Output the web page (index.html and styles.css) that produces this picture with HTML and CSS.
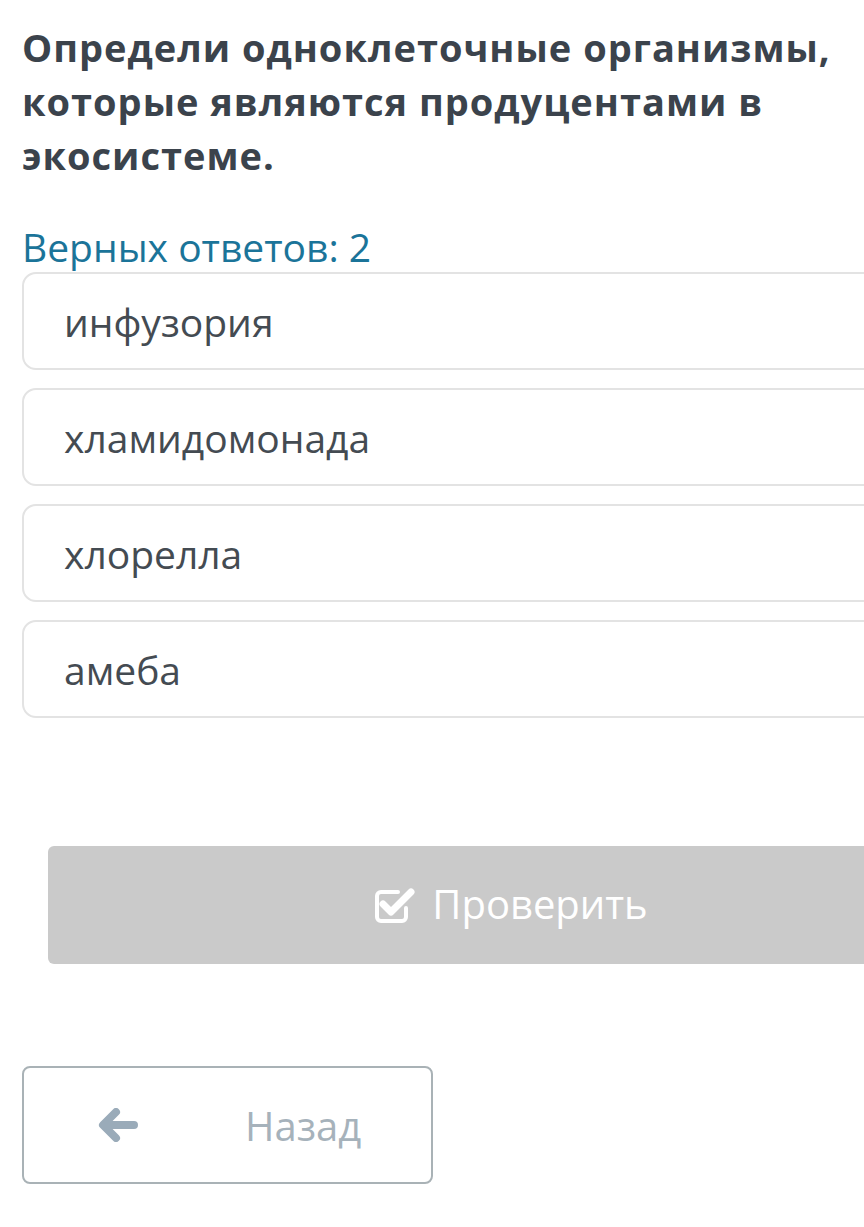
FILE: index.html
```html
<!DOCTYPE html>
<html lang="ru">
<head>
  <meta charset="UTF-8" />
  <meta name="viewport" content="width=device-width, initial-scale=1.0" />
  <title>Тест</title>
  <link rel="stylesheet" href="styles.css">
</head>
<body>

  <div class="page">
    <h1 class="question">Определи одноклеточные организмы, которые являются продуцентами в экосистеме.</h1>

    <p class="hint">Верных ответов: 2</p>

    <div class="answers">
      <div class="answer">инфузория</div>
      <div class="answer">хламидомонада</div>
      <div class="answer">хлорелла</div>
      <div class="answer">амеба</div>
    </div>

    <button class="check-btn" disabled>
      <svg class="check-icon" viewBox="0 0 42 38" width="42" height="38">
        <path d="M32 22 V31 a4 4 0 0 1 -4 4 H7 a4 4 0 0 1 -4 -4 V10 a4 4 0 0 1 4 -4 H24" fill="none" stroke="#fff" stroke-width="4" stroke-linecap="round"/>
        <path d="M9 18 L17 26 L37 6" fill="none" stroke="#fff" stroke-width="7" stroke-linecap="round" stroke-linejoin="round"/>
      </svg>
      <span>Проверить</span>
    </button>

    <button class="back-btn">
      <svg class="back-icon" viewBox="0 0 40 34" width="40" height="34">
        <path d="M18 4 L5 17 L18 30 M6 17 H36" fill="none" stroke="#9aabb9" stroke-width="8" stroke-linecap="round" stroke-linejoin="round"/>
      </svg>
      <span>Назад</span>
    </button>
  </div>

</body>
</html>
```

FILE: styles.css
```css
* {
  box-sizing: border-box;
  margin: 0;
  padding: 0;
}

html, body {
  overflow-x: hidden;
}

body {
  font-family: 'Open Sans', sans-serif;
  background: #fff;
  color: #3e4650;
}

.page {
  width: 1000px;
  padding: 20px 0 0 22px;
}

.question {
  font-size: 38px;
  font-weight: 700;
  line-height: 54px;
  letter-spacing: 1px;
  color: #3b434c;
  width: 840px;
}

.hint {
  margin-top: 40px;
  font-size: 39px;
  line-height: 50px;
  color: #1b7499;
}

.answers {
  display: flex;
  flex-direction: column;
  gap: 18px;
  width: 960px;
}

.answer {
  height: 98px;
  border: 2px solid #e3e3e3;
  border-radius: 14px;
  padding: 0 40px;
  display: flex;
  align-items: center;
  font-size: 39px;
  color: #444b52;
}

.check-btn {
  margin: 128px 0 0 26px;
  width: 926px;
  height: 118px;
  border: none;
  border-radius: 6px;
  background: #cacaca;
  color: #fff;
  font-family: inherit;
  font-size: 40px;
  display: flex;
  align-items: center;
  justify-content: center;
  gap: 16px;
}

.check-btn span {
  padding-bottom: 4px;
}

.back-btn {
  display: flex;
  align-items: center;
  margin-top: 102px;
  width: 411px;
  height: 118px;
  border: 2px solid #a9b2b6;
  border-radius: 8px;
  background: #fff;
  font-family: inherit;
  font-size: 40px;
  color: #a6b2bb;
  padding-left: 74px;
}

.back-icon {
  margin-right: 107px;
}
```
